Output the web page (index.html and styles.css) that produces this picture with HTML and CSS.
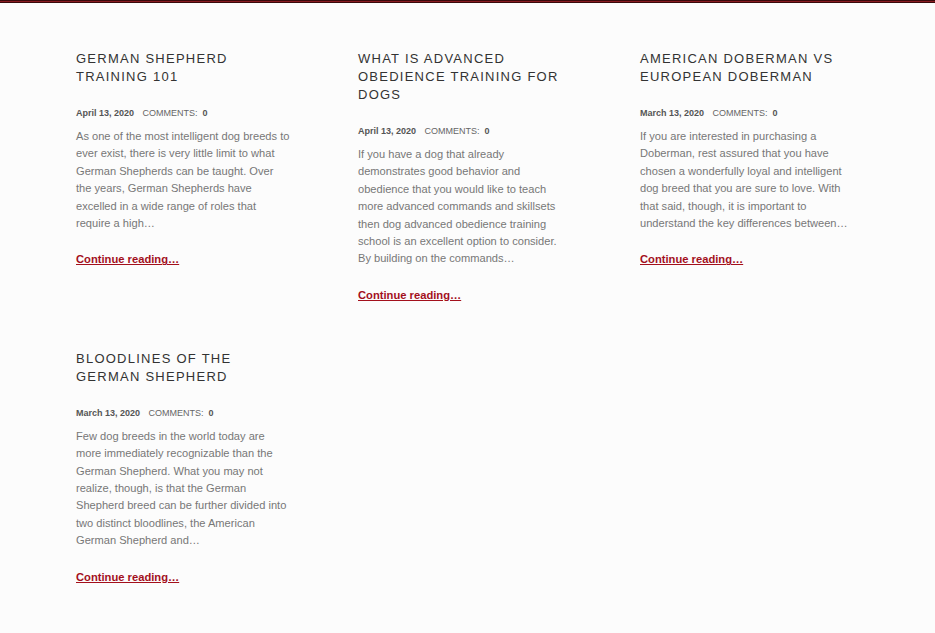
FILE: index.html
```html
<!doctype html>
<html>
<head>
	<meta charset="utf-8">
	<meta name="viewport" content="width=device-width, initial-scale=1.0"/>
	<title>Blog</title>
	<link rel="stylesheet" href="styles.css">
</head>
<body>
<div class="topbar"></div>
<main class="posts">
	<article class="post">
		<h2>German Shepherd Training 101</h2>
		<p class="meta"><b>April 13, 2020</b> <span>Comments: &nbsp;<b>0</b></span></p>
		<p class="stub">As one of the most intelligent dog breeds to ever exist, there is very little limit to what German Shepherds can be taught. Over the years, German Shepherds have excelled in a wide range of roles that require a high…</p>
		<a href="#">Continue reading…</a>
	</article>
	<article class="post">
		<h2>What is Advanced Obedience Training for Dogs</h2>
		<p class="meta"><b>April 13, 2020</b> <span>Comments: &nbsp;<b>0</b></span></p>
		<p class="stub">If you have a dog that already demonstrates good behavior and obedience that you would like to teach more advanced commands and skillsets then dog advanced obedience training school is an excellent option to consider. By building on the commands…</p>
		<a href="#">Continue reading…</a>
	</article>
	<article class="post">
		<h2>American Doberman vs European Doberman</h2>
		<p class="meta"><b>March 13, 2020</b> <span>Comments: &nbsp;<b>0</b></span></p>
		<p class="stub">If you are interested in purchasing a Doberman, rest assured that you have chosen a wonderfully loyal and intelligent dog breed that you are sure to love. With that said, though, it is important to understand the key differences between…</p>
		<a href="#">Continue reading…</a>
	</article>
	<article class="post">
		<h2>Bloodlines of the German Shepherd</h2>
		<p class="meta"><b>March 13, 2020</b> <span>Comments: &nbsp;<b>0</b></span></p>
		<p class="stub">Few dog breeds in the world today are more immediately recognizable than the German Shepherd. What you may not realize, though, is that the German Shepherd breed can be further divided into two distinct bloodlines, the American German Shepherd and…</p>
		<a href="#">Continue reading…</a>
	</article>
</main>
</body>
</html>
```

FILE: styles.css
```css
body {
	margin: 0;
	background: #fcfcfc;
	font-family: 'Liberation Sans', Arial, sans-serif;
}
.topbar {
	height: 1px;
	background: #8a1c22;
	border-top: 1px solid #3a0a0c;
	border-bottom: 1px solid #3a0a0c;
}
.posts {
	display: grid;
	grid-template-columns: repeat(3, 214px);
	column-gap: 68px;
	row-gap: 46px;
	padding: 47px 0 40px 76px;
}
.post h2 {
	margin: 0;
	font-size: 13px;
	font-weight: normal;
	line-height: 18px;
	letter-spacing: 1.25px;
	text-transform: uppercase;
	color: #333;
}
.meta {
	margin: 21px 0 0;
	font-size: 9px;
	line-height: 13px;
	color: #666;
}
.meta b {
	color: #555;
}
.meta span {
	margin-left: 6px;
	text-transform: uppercase;
}
.stub {
	margin: 8px 0 0;
	font-size: 11.1px;
	line-height: 17.4px;
	color: #777;
}
.post a {
	display: inline-block;
	margin-top: 19px;
	font-size: 11.2px;
	line-height: 17px;
	font-weight: bold;
	color: #a3101c;
}
```
